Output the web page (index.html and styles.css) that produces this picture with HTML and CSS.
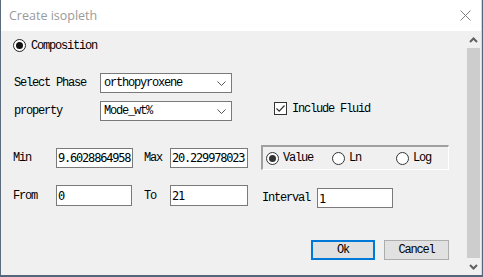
FILE: index.html
```html
<!DOCTYPE html>
<html lang="en">
<head>
    <meta charset="UTF-8">
    <title>Create isopleth</title>
    <link rel="stylesheet" href="styles.css">
</head>
<body>
    <div class="dialog">
        <!-- Title bar -->
        <div class="titlebar">
            <span class="title">Create isopleth</span>
            <svg class="close" width="11" height="11" viewBox="0 0 11 11">
                <path d="M0.5 0.5 L10.5 10.5 M10.5 0.5 L0.5 10.5" stroke="#808080" stroke-width="1" fill="none"/>
            </svg>
        </div>

        <div class="body">
            <div class="content">
                <div class="row row-comp">
                    <span class="radio big checked"></span>
                    <span class="text">Composition</span>
                </div>

                <div class="row row-phase">
                    <span class="label w87">Select Phase</span>
                    <div class="select">
                        <span class="text">orthopyroxene</span>
                        <svg class="chev" width="9" height="5" viewBox="0 0 9 5"><path d="M0.5 0.5 L4.5 4.5 L8.5 0.5" stroke="#555" fill="none"/></svg>
                    </div>
                </div>

                <div class="row row-prop">
                    <span class="label w87">property</span>
                    <div class="select">
                        <span class="text">Mode_wt%</span>
                        <svg class="chev" width="9" height="5" viewBox="0 0 9 5"><path d="M0.5 0.5 L4.5 4.5 L8.5 0.5" stroke="#555" fill="none"/></svg>
                    </div>
                    <label class="check">
                        <span class="box">
                            <svg width="11" height="11" viewBox="0 0 11 11"><path d="M1.5 5.5 L4.2 8.2 L9.5 2.5" stroke="#333" stroke-width="1.2" fill="none"/></svg>
                        </span>
                        <span class="text">Include Fluid</span>
                    </label>
                </div>

                <div class="row row-range">
                    <span class="label w43">Min</span>
                    <div class="input w77"><span class="num">9.6028864958</span></div>
                    <span class="label lab-max">Max</span>
                    <div class="input w78"><span class="num">20.229978023</span></div>
                    <div class="group">
                        <div class="opt o1"><span class="radio checked"></span><span class="text">Value</span></div>
                        <div class="opt o2"><span class="radio"></span><span class="text">Ln</span></div>
                        <div class="opt"><span class="radio"></span><span class="text">Log</span></div>
                    </div>
                </div>

                <div class="row row-from">
                    <span class="label w43">From</span>
                    <div class="input w76 tall"><span class="num">0</span></div>
                    <span class="label lab-to">To</span>
                    <div class="input w78 tall"><span class="num">21</span></div>
                    <span class="label lab-int">Interval</span>
                    <div class="input w76 low"><span class="num">1</span></div>
                </div>

                <div class="row row-buttons">
                    <button class="btn default">Ok</button>
                    <button class="btn">Cancel</button>
                </div>
            </div>

            <!-- Scrollbar -->
            <div class="scrollbar">
                <div class="arrow">
                    <svg width="9" height="6" viewBox="0 0 9 6"><path d="M1 5 L4.5 1.5 L8 5" stroke="#606060" stroke-width="2" fill="none"/></svg>
                </div>
                <div class="thumb"></div>
                <div class="arrow">
                    <svg width="9" height="6" viewBox="0 0 9 6"><path d="M1 1 L4.5 4.5 L8 1" stroke="#606060" stroke-width="2" fill="none"/></svg>
                </div>
            </div>
        </div>
    </div>
</body>
</html>
```

FILE: styles.css
```css
body {
    margin: 0;
    background-color: #55657a;
    font-family: "Liberation Mono", monospace;
    font-size: 12px;
    color: #000;
}

.dialog {
    width: 480px;
    height: 275px;
    border-left: 1px solid #5b6b7e;
    border-right: 1px solid #d8d8d8;
    background-color: #f0f0f0;
    display: flex;
    flex-direction: column;
}

.titlebar {
    height: 31px;
    flex: none;
    background-color: #fff;
    display: flex;
    align-items: center;
    justify-content: space-between;
    padding: 0 10px 0 8px;
}

.title {
    font-family: "Open Sans", "Noto Sans", sans-serif;
    font-size: 12.5px;
    color: #9a9a9a;
    margin-top: -1px;
}

.close {
    margin-top: -1px;
}

.body {
    flex: 1;
    display: flex;
    min-height: 0;
}

.content {
    flex: 1;
    padding-left: 12px;
}

.text,
.label {
    letter-spacing: -1.2px;
    white-space: nowrap;
    line-height: 14px;
}

.row {
    display: flex;
    align-items: center;
}

.row-comp {
    margin-top: 8px;
    height: 13px;
    gap: 5px;
}

.row-phase {
    margin-top: 21px;
}

.row-prop {
    margin-top: 8px;
}

.row-range {
    margin-top: 24px;
    height: 25px;
}

.row-from {
    margin-top: 15px;
    height: 23px;
    align-items: flex-start;
}

.row-from .label {
    margin-top: 4px;
}

.row-from .lab-int {
    margin-top: 6px;
}

.row-buttons {
    margin-top: 32px;
    justify-content: flex-end;
    padding-right: 17px;
    gap: 9px;
}

.w87 { width: 87px; padding-left: 1px; box-sizing: border-box; }
.w43 { width: 43px; }
.lab-max { width: 26px; margin-left: 11px; }
.lab-to { width: 26px; margin-left: 12px; }
.lab-int { width: 55px; margin-left: 14px; }

/* radio buttons */
.radio {
    width: 13px;
    height: 13px;
    box-sizing: border-box;
    border: 1px solid #333;
    border-radius: 50%;
    background-color: #fff;
    display: inline-flex;
    align-items: center;
    justify-content: center;
    flex: none;
}

.radio.checked::after {
    content: "";
    width: 7px;
    height: 7px;
    border-radius: 50%;
    background-color: #333;
}

.radio.big {
    border-color: #222;
}

.radio.big.checked::after {
    background-color: #111;
}

/* combo boxes */
.select {
    width: 132px;
    height: 20px;
    box-sizing: border-box;
    border: 1px solid #7a7a7a;
    background-color: #fff;
    display: flex;
    align-items: center;
    justify-content: space-between;
    padding: 0 5px 0 3px;
}

.chev {
    margin-top: 1px;
}

.check {
    display: flex;
    align-items: center;
    gap: 5px;
    margin-left: 42px;
    margin-top: -5px;
}

.check .box {
    width: 13px;
    height: 13px;
    box-sizing: border-box;
    border: 1px solid #333;
    background-color: #fff;
    display: flex;
    align-items: center;
    justify-content: center;
}

/* edit fields */
.input {
    height: 20px;
    box-sizing: border-box;
    border: 1px solid #7a7a7a;
    background-color: #fff;
    overflow: hidden;
    display: flex;
    align-items: center;
    padding-left: 1px;
}

.input.tall { height: 21px; }
.input.low { margin-top: 3px; }

.w76 { width: 76px; }
.w77 { width: 77px; }
.w78 { width: 78px; }

.num {
    font-family: "DejaVu Sans Mono", monospace;
    font-size: 12px;
    letter-spacing: -1.2px;
    white-space: nowrap;
    margin-top: 1px;
}

/* radio group */
.group {
    margin-left: 13px;
    width: 188px;
    height: 25px;
    box-sizing: border-box;
    border-top: 2px solid #a0a0a0;
    border-left: 2px solid #a0a0a0;
    border-bottom: 1px solid #fff;
    border-right: 1px solid #fff;
    display: flex;
    align-items: center;
    padding-left: 3px;
}

.opt {
    display: flex;
    align-items: center;
    gap: 4px;
}

.o1 { width: 66px; }
.o2 { width: 64px; }

/* buttons */
.btn {
    height: 20px;
    box-sizing: border-box;
    background-color: #e1e1e1;
    border: 1px solid #adadad;
    font-family: "Liberation Mono", monospace;
    font-size: 12px;
    letter-spacing: -1.2px;
    padding: 0;
    width: 65px;
    color: #000;
}

.btn.default {
    width: 64px;
    border: 2px solid #0078d7;
}

/* scrollbar */
.scrollbar {
    width: 15px;
    display: flex;
    flex-direction: column;
    background-color: #f0f0f0;
}

.arrow {
    height: 17px;
    display: flex;
    align-items: center;
    justify-content: center;
}

.thumb {
    flex: 1;
    margin: 0 1px;
    background-color: #cdcdcd;
}
```
